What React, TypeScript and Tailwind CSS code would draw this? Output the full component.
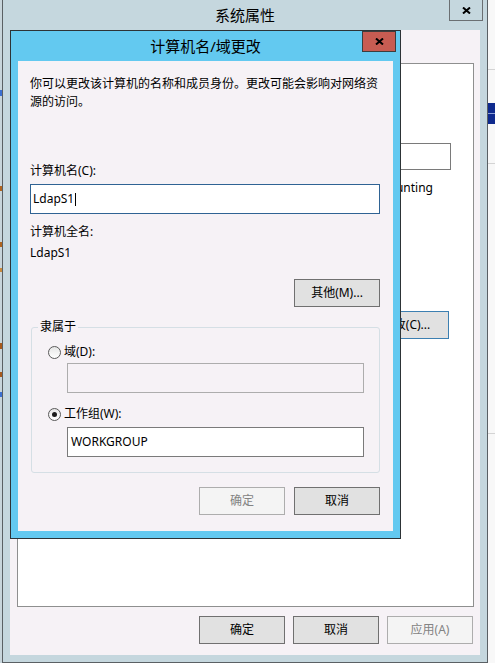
import type { ReactNode } from 'react';

// bold little "x" used on the caption close buttons
function CloseGlyph() {
  return (
    <svg width="9" height="7" viewBox="0 0 9 7" fill="none">
      <path d="M1 0.5 L8 6.5 M8 0.5 L1 6.5" stroke="#000" strokeWidth="2" />
    </svg>
  );
}

type BtnProps = { children: ReactNode; variant?: 'normal' | 'disabled' | 'default' };

function WinButton({ children, variant = 'normal' }: BtnProps) {
  const look =
    variant === 'disabled'
      ? 'border-[#adadad] bg-[#f4f4f4] text-[#838383]'
      : variant === 'default'
        ? 'border-[#3c7fb1] bg-[#e1e1e1] text-black'
        : 'border-[#707070] bg-[#e1e1e1] text-black';
  return (
    <button
      type="button"
      className={`flex h-[28px] w-[86px] shrink-0 items-center justify-center border leading-[18px] ${look}`}
    >
      {children}
    </button>
  );
}

function Radio({ checked = false }: { checked?: boolean }) {
  return (
    <span className="flex h-[13px] w-[13px] shrink-0 items-center justify-center rounded-full border border-[#5a5a5a] bg-gradient-to-b from-[#e6e6e6] to-white">
      {checked && <span className="h-[5px] w-[5px] rounded-full bg-[#1a1a1a]" />}
    </span>
  );
}

export default function App() {
  return (
    <div className="relative h-[663px] w-[495px] overflow-hidden bg-[#c8d5db] font-['Noto_Sans','Noto_Sans_CJK_SC',sans-serif] text-[12px] leading-[18px] text-black">
      {/* desktop icon fragments peeking out on the left */}
      <span className="absolute left-0 top-[90px] h-[6px] w-[2px] bg-[#3b6fd1]" />
      <span className="absolute left-0 top-[186px] h-[5px] w-[2px] bg-[#b0641e]" />
      <span className="absolute left-0 top-[242px] h-[5px] w-[2px] bg-[#b0641e]" />
      <span className="absolute left-0 top-[268px] h-[4px] w-[2px] bg-[#c98a3c]" />
      <span className="absolute left-0 top-[343px] h-[6px] w-[2px] bg-[#a85a1c]" />
      <span className="absolute left-0 top-[372px] h-[5px] w-[2px] bg-[#a85a1c]" />
      <span className="absolute left-0 top-[392px] h-[5px] w-[2px] bg-[#3b6fd1]" />

      {/* another window behind, on the right */}
      <div className="absolute left-[488px] top-0 flex h-full w-[7px] flex-col bg-[#f8f8f8]">
        <div className="mt-[69px] h-px bg-[#d4d4d4]" />
        <div className="mt-[33px] h-[10px] bg-[#0f2a8e]" />
        <div className="h-px bg-[#8ea0d8]" />
        <div className="h-[10px] bg-[#0f2a8e]" />
        <div className="mt-[39px] h-px bg-[#d4d4d4]" />
        <div className="mt-[269px] h-px bg-[#d4d4d4]" />
      </div>

      {/* ===== 系统属性 ===== */}
      <div className="absolute left-[2px] top-[-8px] flex h-[671px] w-[486px] flex-col border border-[#5a6064] bg-[#c5d7de]">
        <div className="relative flex h-[37px] shrink-0 items-end justify-center pb-[6px]">
          <span className="text-[15px] leading-[18px]">系统属性</span>
          <button
            type="button"
            className="absolute right-[4px] top-[6px] flex h-[22px] w-[34px] items-center justify-center border border-[#6b6f72]"
          >
            <CloseGlyph />
          </button>
        </div>

        <div className="mx-[7px] flex h-[625px] flex-col bg-[#f6f2f6]">
          {/* tab strip, sits under the dialog */}
          <div className="h-[33px]" />

          <div className="ml-[7px] flex h-[544px] w-[457px] flex-col border border-[#8e8f8f] bg-white">
            <div className="h-[79px]" />

            {/* computer description box */}
            <div className="flex h-[27px] items-center pl-[120px] pr-[22px]">
              <div className="h-[27px] flex-1 border border-[#7a7a7a] bg-white" />
            </div>

            <div className="mt-[9px] flex justify-end whitespace-nowrap pr-[40px]">"Accounting</div>

            <div className="h-[114px]" />

            <div className="flex justify-end pr-[24px]">
              <WinButton variant="default">更改(C)...</WinButton>
            </div>
          </div>

          <div className="mt-[9px] flex justify-end gap-[8px] pr-[7px]">
            <WinButton>确定</WinButton>
            <WinButton>取消</WinButton>
            <WinButton variant="disabled">应用(A)</WinButton>
          </div>
        </div>
      </div>

      {/* ===== 计算机名/域更改 ===== */}
      <div className="absolute left-[10px] top-[30px] flex h-[509px] w-[391px] flex-col border border-[#2d3336] bg-[#63c9f0]">
        <div className="relative flex h-[30px] shrink-0 items-center justify-center">
          <span className="text-[15px] leading-[18px]">计算机名/域更改</span>
          <button
            type="button"
            className="absolute left-[351px] top-0 flex h-[21px] w-[34px] items-center justify-center border border-[#3d3d3d] bg-[#c75c52]"
          >
            <CloseGlyph />
          </button>
        </div>

        <div className="mx-[7px] flex h-[470px] flex-col bg-[#f6f2f6] pl-[12px] pr-[13px] pt-[14px]">
          <p>
            你可以更改该计算机的名称和成员身份。更改可能会影响对网络资
            <br />
            源的访问。
          </p>

          <span className="mt-[51px]">计算机名(C):</span>
          <div className="mt-[4px] flex h-[30px] w-[350px] items-center border border-[#2f6394] bg-white pl-[2px]">
            <span>LdapS1</span>
            <span className="ml-px inline-block h-[13px] w-px bg-black" />
          </div>

          <span className="mt-[9px]">计算机全名:</span>
          <span className="mt-[3px]">LdapS1</span>

          <div className="mt-[17px] flex justify-end">
            <WinButton>其他(M)...</WinButton>
          </div>

          <fieldset className="ml-[1px] mt-[11px] w-[349px] rounded-[3px] border border-[#d5dfe5] pb-[15px] pl-[6px]">
            <legend className="px-[2px] leading-[18px]">隶属于</legend>
            <div className="flex flex-col pl-[10px]">
              <label className="mt-[7px] flex items-center gap-[3px]">
                <Radio />
                <span>域(D):</span>
              </label>
              <div className="ml-[19px] mt-[2px] h-[30px] w-[297px] border border-[#adadad]" />

              <label className="mt-[12px] flex items-center gap-[3px]">
                <Radio checked />
                <span>工作组(W):</span>
              </label>
              <div className="ml-[19px] mt-[4px] flex h-[30px] w-[297px] items-center border border-[#7a7a7a] bg-white pl-[3px]">
                WORKGROUP
              </div>
            </div>
          </fieldset>

          <div className="mt-[14px] flex justify-end gap-[9px]">
            <WinButton variant="disabled">确定</WinButton>
            <WinButton>取消</WinButton>
          </div>
        </div>
      </div>
    </div>
  );
}
